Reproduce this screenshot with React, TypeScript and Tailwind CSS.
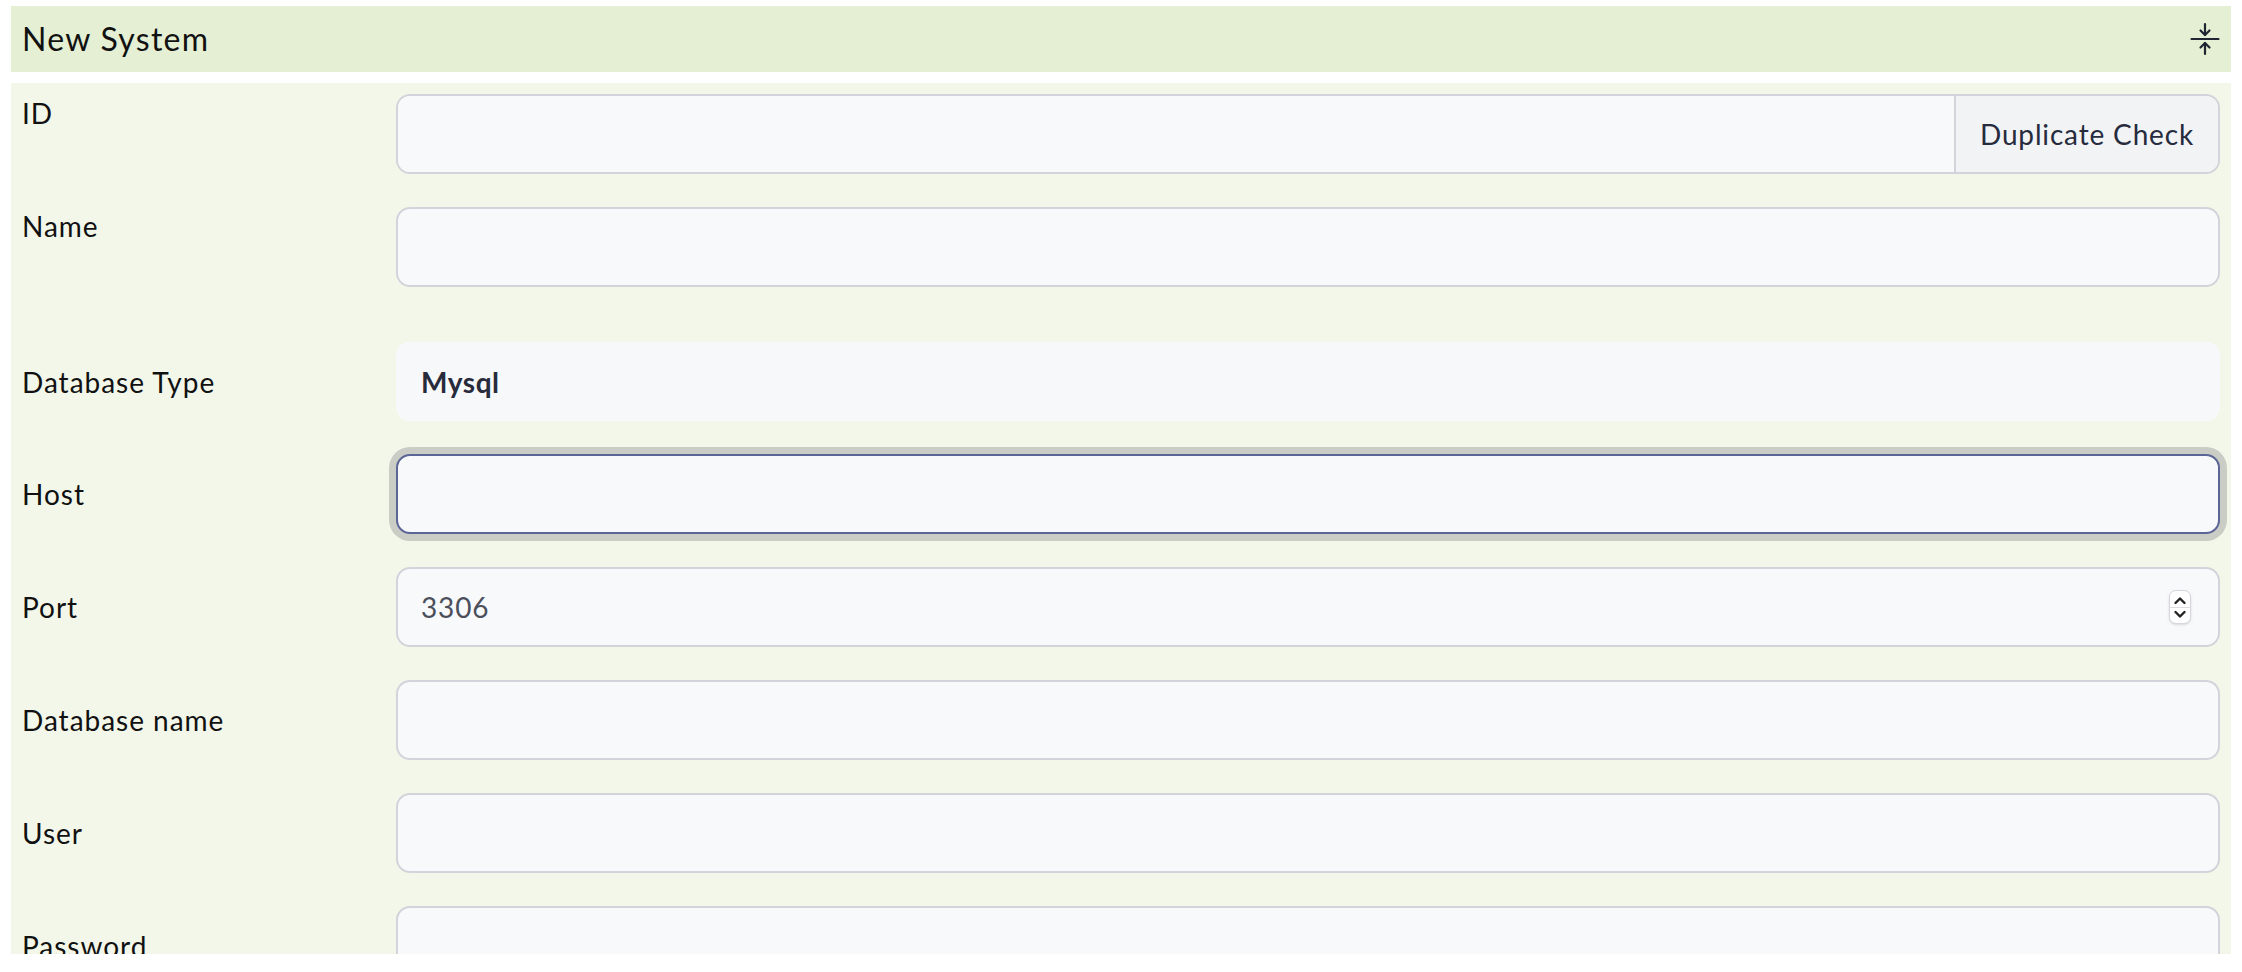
import React from "react";

const font = { fontFamily: "Lato, 'Open Sans', sans-serif" };

type Row = {
  label: string;
  kind: "text" | "dup" | "static" | "focus" | "number";
  value?: string;
  top?: boolean;
  extra?: boolean;
};

const rows: Row[] = [
  { label: "ID", kind: "dup", top: true },
  { label: "Name", kind: "text", top: true },
  { label: "Database Type", kind: "static", value: "Mysql", extra: true },
  { label: "Host", kind: "focus" },
  { label: "Port", kind: "number", value: "3306" },
  { label: "Database name", kind: "text" },
  { label: "User", kind: "text" },
  { label: "Password", kind: "text" },
];

const CollapseIcon = () => (
  <svg width="30" height="34" viewBox="0 0 30 34" fill="none" stroke="#1f2533" strokeWidth="2.2" strokeLinecap="round" strokeLinejoin="round">
    <path d="M15 2v11" />
    <path d="M10.5 8.5 15 13l4.5-4.5" />
    <path d="M1.5 17h27" />
    <path d="M15 32V21" />
    <path d="M10.5 25.5 15 21l4.5 4.5" />
  </svg>
);

const Spinner = () => (
  <div className="flex h-[34px] w-[22px] flex-col items-center justify-center rounded-[7px] border border-[#d6d7dc] bg-white shadow-sm">
    <svg width="14" height="9" viewBox="0 0 14 9" fill="none" stroke="#222" strokeWidth="2.4" strokeLinecap="round" strokeLinejoin="round">
      <path d="M2.5 7 7 2.5 11.5 7" />
    </svg>
    <div className="my-[2px] h-px w-full bg-[#dcdde2]" />
    <svg width="14" height="9" viewBox="0 0 14 9" fill="none" stroke="#222" strokeWidth="2.4" strokeLinecap="round" strokeLinejoin="round">
      <path d="M2.5 2 7 6.5 11.5 2" />
    </svg>
  </div>
);

const Field = ({ row }: { row: Row }) => {
  if (row.kind === "dup") {
    return (
      <div className="flex h-[80px] w-full overflow-hidden rounded-[14px] border-2 border-[#d3d4db]">
        <div className="flex-1 bg-[#f8f9fb]" />
        <div className="flex w-[264px] items-center justify-center border-l-2 border-[#d3d4db] bg-[#f2f3f5] text-[28px] tracking-[0.03em] text-[#262b3d]">
          Duplicate Check
        </div>
      </div>
    );
  }
  if (row.kind === "static") {
    return (
      <div className="flex h-[79px] w-full items-center rounded-[14px] bg-[#f7f8fa] pl-[25px] text-[28px] font-bold tracking-[0.02em] text-[#272b3b]">
        {row.value}
      </div>
    );
  }
  if (row.kind === "focus") {
    return (
      <div className="h-[80px] w-full rounded-[14px] border-2 border-[#5b6597] bg-[#f8f9fb] ring-[7px] ring-[#c9cdc5]" />
    );
  }
  if (row.kind === "number") {
    return (
      <div className="flex h-[80px] w-full items-center justify-between rounded-[14px] border-2 border-[#d3d4db] bg-[#f8f9fb] pl-[23px] pr-[27px] text-[28px] tracking-[0.03em] text-[#4b4f5c]">
        <span>{row.value}</span>
        <Spinner />
      </div>
    );
  }
  return <div className="h-[80px] w-full rounded-[14px] border-2 border-[#d3d4db] bg-[#f8f9fb]" />;
};

export default function App() {
  return (
    <div className="h-[972px] overflow-hidden bg-white px-[11px] pt-[6px]" style={font}>
      <div className="flex h-[66px] items-center justify-between bg-[#e4efd3] pl-[11px] pr-[11px]">
        <span className="text-[32px] tracking-[0.04em] text-[#111]">New System</span>
        <CollapseIcon />
      </div>
      <div className="mt-[11px] h-[871px] overflow-hidden bg-[#f3f7ea] px-[11px] pt-[11px]">
        <div className="flex flex-col gap-[33px]">
          {rows.map((row) => (
            <div
              key={row.label}
              className={`flex ${row.top ? "items-start" : "items-center"} ${row.extra ? "mt-[22px]" : ""}`}
            >
              <div className="w-[374px] shrink-0 text-[28px] leading-[38px] tracking-[0.035em] text-[#111]">
                {row.label}
              </div>
              <div className="flex-1">
                <Field row={row} />
              </div>
            </div>
          ))}
        </div>
      </div>
    </div>
  );
}
